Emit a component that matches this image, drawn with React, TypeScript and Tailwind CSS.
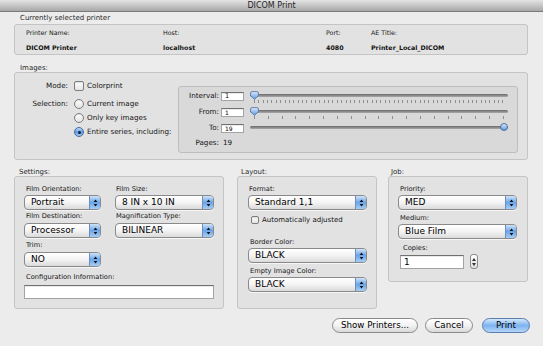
import React from 'react';

const sans = "font-['DejaVu_Sans',sans-serif]";

function Arrows() {
  return (
    <svg width="5" height="8" viewBox="0 0 5 8">
      <path d="M2.5 0.6 L4.4 3.1 H0.6 Z M2.5 7.4 L4.4 4.9 H0.6 Z" fill="#141414" />
    </svg>
  );
}

function PopUp({ value, className = '' }: { value: string; className?: string }) {
  return (
    <div
      className={`flex h-[15px] overflow-hidden rounded-[4px] border border-[#8a8a8a] bg-gradient-to-b from-white via-[#f4f4f4] to-[#dadada] shadow-[0_1px_0_rgba(255,255,255,0.7)] ${className}`}
    >
      <span className="flex-1 truncate pl-[6px] text-[9px] leading-[13px] text-black">{value}</span>
      <span className="flex w-[11px] items-center justify-center border-l border-[#6f8fb8] bg-gradient-to-b from-[#cfe3f9] via-[#6aa5ea] to-[#a6cdf5]">
        <Arrows />
      </span>
    </div>
  );
}

function Check({ className = '' }: { className?: string }) {
  return (
    <span
      className={`rounded-[2px] border border-[#7d7d7d] bg-gradient-to-b from-white to-[#e4e4e4] shadow-[inset_0_1px_1px_rgba(0,0,0,0.12)] ${className}`}
    />
  );
}

function Radio({ on = false }: { on?: boolean }) {
  if (on) {
    return (
      <span className="flex h-[10px] w-[10px] items-center justify-center rounded-full border border-[#46699a] bg-gradient-to-b from-[#c4dcf7] via-[#5a9ae6] to-[#a3cbf4]">
        <span className="h-[3px] w-[3px] rounded-full bg-[#0f213b]" />
      </span>
    );
  }
  return (
    <span className="h-[10px] w-[10px] rounded-full border border-[#7d7d7d] bg-gradient-to-b from-white to-[#e2e2e2] shadow-[inset_0_1px_1px_rgba(0,0,0,0.1)]" />
  );
}

function Thumb({ pointed }: { pointed: boolean }) {
  if (pointed) {
    return (
      <svg width="9" height="9" viewBox="0 0 9 9">
        <defs>
          <linearGradient id="thumbA" x1="0" y1="0" x2="0" y2="1">
            <stop offset="0" stopColor="#dbe9fa" />
            <stop offset="1" stopColor="#5b98e2" />
          </linearGradient>
        </defs>
        <path
          d="M2 0.6 H7 Q8.4 0.6 8.4 2 V4.6 L4.5 8.4 L0.6 4.6 V2 Q0.6 0.6 2 0.6 Z"
          fill="url(#thumbA)"
          stroke="#4d6f9c"
          strokeWidth="0.8"
        />
      </svg>
    );
  }
  return (
    <span className="block h-[8px] w-[8px] rounded-full border border-[#4d6f9c] bg-gradient-to-b from-[#dbe9fa] to-[#5b98e2]" />
  );
}

function Slider({ ticks, end = false }: { ticks: number; end?: boolean }) {
  return (
    <div className="relative ml-[6px] flex-1 self-stretch">
      <div className="absolute left-0 right-0 top-[6px] h-[3px] rounded-full bg-gradient-to-b from-[#6a6a6a] to-[#aaaaaa]" />
      {ticks > 0 && (
        <div className="absolute left-[4px] right-[4px] top-[12px] flex justify-between">
          {Array.from({ length: ticks }).map((_, i) => (
            <span key={i} className="h-[3px] w-px bg-[#8e8e8e]" />
          ))}
        </div>
      )}
      {end ? (
        <div className="absolute right-0 top-[3px]">
          <Thumb pointed={false} />
        </div>
      ) : (
        <div className="absolute left-0 top-[3px]">
          <Thumb pointed />
        </div>
      )}
    </div>
  );
}

function Field({ value, className = '' }: { value: string; className?: string }) {
  return (
    <div
      className={`border border-[#a3a3a3] border-t-[#707070] bg-white pl-[3px] text-black shadow-[inset_0_1px_0_rgba(0,0,0,0.08)] ${className}`}
    >
      {value}
    </div>
  );
}

function Button({ label, primary = false, className = '' }: { label: string; primary?: boolean; className?: string }) {
  return (
    <div
      className={`flex h-[15px] items-center justify-center rounded-full border text-[8.7px] leading-none text-black ${
        primary
          ? 'border-[#5b7fad] bg-gradient-to-b from-[#d4e8fc] via-[#7db3ef] to-[#b5d6f8]'
          : 'border-[#8a8a8a] bg-gradient-to-b from-white via-[#f2f2f2] to-[#d9d9d9]'
      } ${className}`}
    >
      {label}
    </div>
  );
}

const boxCls = 'rounded-[3px] border border-[#c4c4c4] bg-[#e2e2e2]';
const lbl = 'h-[10px] text-[6.7px] leading-[10px] text-[#141414]';

export default function App() {
  return (
    <div className={`h-[346px] w-[543px] overflow-hidden bg-[#ececec] text-[#141414] ${sans}`}>
      {/* title bar */}
      <div className="flex h-[12px] items-center justify-center border-b border-[#7a7a7a] bg-gradient-to-b from-[#e4e4e4] to-[#a8a8a8] text-[8px] leading-none text-[#1e1e1e]">
        DICOM Print
      </div>

      <div className="pl-[14px] pr-[15px]">
        {/* current printer */}
        <div className="mt-[1px] h-[10px] pl-[6px] text-[7px] leading-[10px] text-[#2a2a2a]">Currently selected printer</div>
        <div className={`mt-[1px] h-[31px] pl-[11px] pt-[3px] ${boxCls}`}>
          <div className="grid grid-cols-[137px_163px_45px_1fr] gap-y-[5px] text-[6.3px] leading-[10px]">
            <span>Printer Name:</span>
            <span>Host:</span>
            <span>Port:</span>
            <span>AE Title:</span>
            <span className="font-bold">DICOM Printer</span>
            <span className="font-bold">localhost</span>
            <span className="font-bold">4080</span>
            <span className="font-bold">Printer_Local_DICOM</span>
          </div>
        </div>

        {/* images */}
        <div className="mt-[9px] h-[8px] pl-[6px] text-[7px] leading-[8px] text-[#2a2a2a]">Images:</div>
        <div className={`flex h-[88px] text-[7.2px] ${boxCls}`}>
          <div className="w-[163px] pt-[7px]">
            <div className="flex h-[12px] items-center">
              <span className="w-[53px] text-right">Mode:</span>
              <Check className="ml-[6px] h-[10px] w-[10px]" />
              <span className="ml-[3px]">Colorprint</span>
            </div>
            <div className="mt-[6px] flex">
              <span className="h-[12px] w-[53px] text-right leading-[12px]">Selection:</span>
              <div className="ml-[6px] flex flex-col gap-[2px]">
                <div className="flex h-[12px] items-center">
                  <Radio />
                  <span className="ml-[3px]">Current image</span>
                </div>
                <div className="flex h-[12px] items-center">
                  <Radio />
                  <span className="ml-[3px]">Only key images</span>
                </div>
                <div className="flex h-[12px] items-center">
                  <Radio on />
                  <span className="ml-[3px]">Entire series, including:</span>
                </div>
              </div>
            </div>
          </div>

          <div className="mb-[6px] mr-[9px] mt-[13px] flex-1 rounded-[3px] border border-[#bdbdbd] bg-[#d9d9d9] pr-[9px] pt-[1px]">
            <div className="flex h-[16px] items-center">
              <span className="w-[40px] text-right">Interval:</span>
              <Field
                value="1"
                className="ml-[2px] h-[9px] w-[23px] text-[6.5px] leading-[7px] shadow-[0_0_0_2px_#8fb5ea]"
              />
              <Slider ticks={58} />
            </div>
            <div className="flex h-[16px] items-center">
              <span className="w-[40px] text-right">From:</span>
              <Field value="1" className="ml-[2px] h-[9px] w-[23px] text-[6px] leading-[7px]" />
              <Slider ticks={19} />
            </div>
            <div className="flex h-[16px] items-center">
              <span className="w-[40px] text-right">To:</span>
              <Field value="19" className="ml-[2px] h-[9px] w-[23px] text-[6px] leading-[7px]" />
              <Slider ticks={0} end />
            </div>
            <div className="flex h-[15px] items-center">
              <span className="w-[40px] text-right">Pages:</span>
              <span className="ml-[4px]">19</span>
            </div>
          </div>
        </div>

        {/* settings / layout / job */}
        <div className="mt-[8px] flex items-start">
          <div className="w-[210px]">
            <div className="h-[8px] pl-[5px] text-[7px] leading-[8px] text-[#2a2a2a]">Settings:</div>
            <div className={`h-[133px] pl-[9px] pt-[7px] ${boxCls}`}>
              <div className="flex">
                <div className="w-[77px]">
                  <div className={`${lbl} pl-[2px]`}>Film Orientation:</div>
                  <PopUp value="Portrait" className="mt-[1px]" />
                  <div className={`${lbl} mt-[1px] pl-[2px]`}>Film Destination:</div>
                  <PopUp value="Processor" className="mt-[2px]" />
                  <div className={`${lbl} mt-[2px] pl-[2px]`}>Trim:</div>
                  <PopUp value="NO" className="mt-[2px]" />
                </div>
                <div className="ml-[14px] w-[99px]">
                  <div className={`${lbl} pl-[1px]`}>Film Size:</div>
                  <PopUp value="8 IN x 10 IN" className="mt-[1px]" />
                  <div className={`${lbl} mt-[1px] pl-[1px]`}>Magnification Type:</div>
                  <PopUp value="BILINEAR" className="mt-[2px]" />
                </div>
              </div>
              <div className={`${lbl} mt-[5px] pl-[2px]`}>Configuration Information:</div>
              <Field value="" className="mt-[3px] h-[14px] w-[190px]" />
            </div>
          </div>

          <div className="ml-[13px] w-[140px]">
            <div className="h-[8px] pl-[4px] text-[7px] leading-[8px] text-[#2a2a2a]">Layout:</div>
            <div className={`h-[133px] pl-[10px] pr-[9px] pt-[7px] ${boxCls}`}>
              <div className={`${lbl} pl-[1px]`}>Format:</div>
              <PopUp value="Standard 1,1" className="mt-[1px]" />
              <div className="mt-[4px] flex h-[12px] items-center pl-[3px]">
                <Check className="h-[8px] w-[8px]" />
                <span className="ml-[3px] text-[7px]">Automatically adjusted</span>
              </div>
              <div className={`${lbl} mt-[11px] pl-[2px]`}>Border Color:</div>
              <PopUp value="BLACK" className="mt-[1px]" />
              <div className={`${lbl} mt-[3px] pl-[2px]`}>Empty Image Color:</div>
              <PopUp value="BLACK" className="mt-[1px]" />
            </div>
          </div>

          <div className="ml-[11px] w-[140px]">
            <div className="h-[8px] pl-[3px] text-[7px] leading-[8px] text-[#2a2a2a]">Job:</div>
            <div className={`h-[106px] pl-[9px] pr-[10px] pt-[7px] ${boxCls}`}>
              <div className={`${lbl} pl-[2px]`}>Priority:</div>
              <PopUp value="MED" className="mt-[1px]" />
              <div className={`${lbl} mt-[3px] pl-[2px]`}>Medium:</div>
              <PopUp value="Blue Film" className="mt-[1px]" />
              <div className={`${lbl} mt-[4px] pl-[5px]`}>Copies:</div>
              <div className="mt-[1px] flex items-center">
                <Field value="1" className="ml-[2px] h-[14px] w-[64px] text-[9px] leading-[12px]" />
                <div className="ml-[6px] flex h-[15px] w-[8px] flex-col items-center justify-center gap-[2px] rounded-[3px] border border-[#8a8a8a] bg-gradient-to-b from-white to-[#dedede]">
                  <svg width="4" height="3" viewBox="0 0 4 3">
                    <path d="M2 0 L4 3 H0 Z" fill="#333" />
                  </svg>
                  <svg width="4" height="3" viewBox="0 0 4 3">
                    <path d="M2 3 L4 0 H0 Z" fill="#333" />
                  </svg>
                </div>
              </div>
            </div>
          </div>
        </div>
      </div>

      {/* buttons */}
      <div className="mt-[9px] flex justify-end pr-[13px]">
        <Button label="Show Printers..." className="w-[86px]" />
        <Button label="Cancel" className="ml-[7px] w-[48px]" />
        <Button label="Print" primary className="ml-[9px] w-[48px]" />
      </div>
    </div>
  );
}
